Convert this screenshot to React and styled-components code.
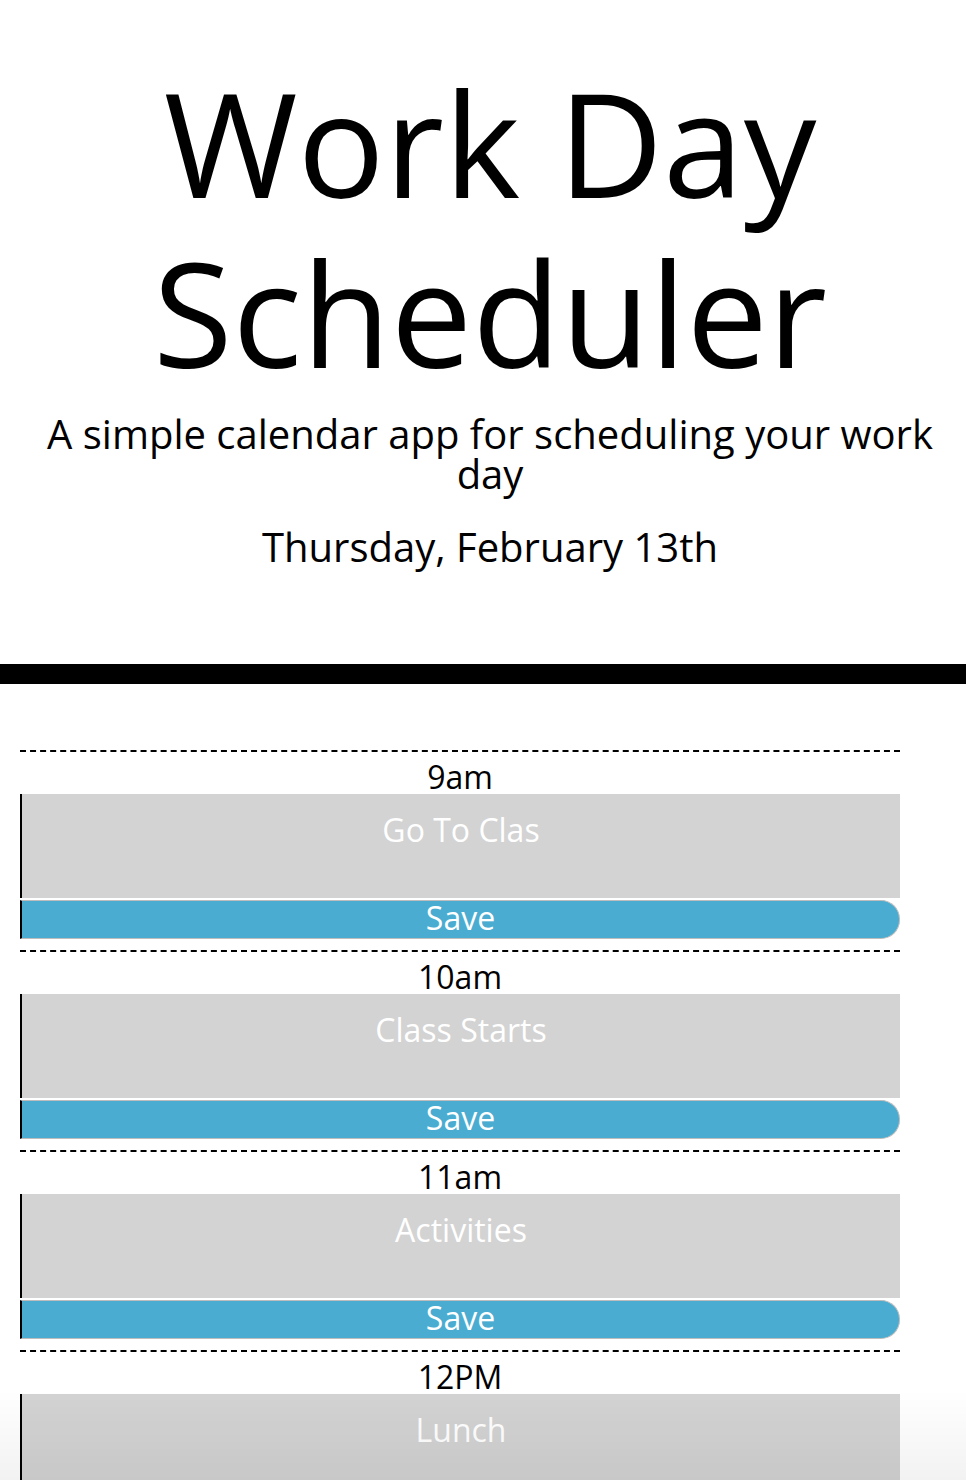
import React from "react";
import styled, { createGlobalStyle } from "styled-components";

const Global = createGlobalStyle`
  html, body { margin: 0; padding: 0; background: #fff; }
  body { font-family: "Open Sans", "Noto Sans", sans-serif; color: #000; }
  * { box-sizing: border-box; }
`;

const Header = styled.header`
  padding: 57px 13px 87px 27px;
  text-align: center;
  border-bottom: 20px solid #000;
`;

const Title = styled.h1`
  margin: 0;
  font-size: 145px;
  font-weight: 400;
  line-height: 170px;
`;

const Lead = styled.p`
  margin: 17px 0 0;
  font-size: 40px;
  line-height: 40px;
`;

const Today = styled.p`
  margin: 23px 0 0;
  font-size: 40px;
  line-height: 60px;
`;

const Schedule = styled.main`
  width: 880px;
  margin: 66px 0 0 20px;
  padding-bottom: 40px;
`;

const Row = styled.section`
  display: flex;
  flex-direction: column;
  border-top: 2px dashed #000;
  padding-bottom: 11px;
`;

const Hour = styled.div`
  height: 42px;
  padding-top: 8px;
  font-size: 32px;
  line-height: 34px;
  text-align: center;
`;

const Description = styled.textarea`
  display: block;
  width: 100%;
  height: 104px;
  margin: 0;
  padding: 16px 10px 0;
  border: none;
  border-left: 2px solid #000;
  background: #d3d3d3;
  color: #fff;
  font-family: inherit;
  font-size: 32px;
  line-height: 40px;
  text-align: center;
  resize: none;
  outline: none;
`;

const SaveBtn = styled.button`
  display: block;
  width: 100%;
  height: 39px;
  margin-top: 2px;
  padding: 0 0 3px;
  border: 1.5px solid #bdbdbd;
  border-left: 2px solid #000;
  border-radius: 0 19px 19px 0;
  background: #4aacd1;
  color: #fff;
  font-family: inherit;
  font-size: 32px;
  line-height: 34px;
  text-align: center;
`;

const BottomShade = styled.div`
  position: fixed;
  left: 0;
  right: 0;
  bottom: 0;
  height: 90px;
  pointer-events: none;
  background: linear-gradient(to bottom, rgba(0,0,0,0), rgba(0,0,0,0.05));
`;

const hours = [
  { label: "9am", text: "Go To Clas" },
  { label: "10am", text: "Class Starts" },
  { label: "11am", text: "Activities" },
  { label: "12PM", text: "Lunch" },
  { label: "1pm", text: "" },
  { label: "2pm", text: "" },
];

export default function App() {
  return (
    <>
      <Global />
      <Header>
        <Title>Work Day Scheduler</Title>
        <Lead>A simple calendar app for scheduling your work day</Lead>
        <Today>Thursday, February 13th</Today>
      </Header>
      <Schedule>
        {hours.map((h) => (
          <Row key={h.label}>
            <Hour>{h.label}</Hour>
            <Description defaultValue={h.text} />
            <SaveBtn type="button">Save</SaveBtn>
          </Row>
        ))}
      </Schedule>
      <BottomShade />
    </>
  );
}
